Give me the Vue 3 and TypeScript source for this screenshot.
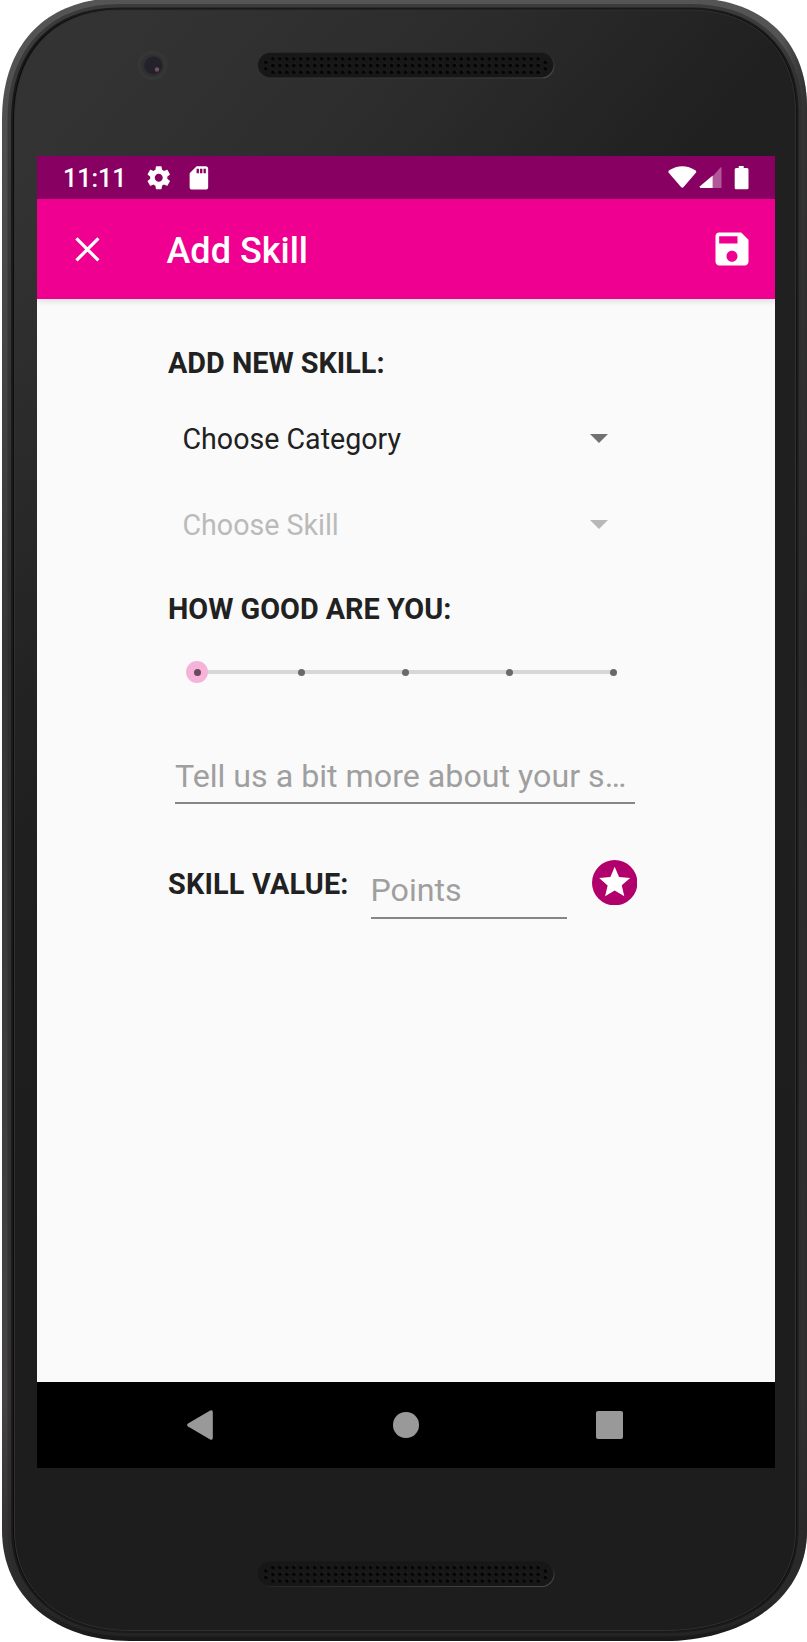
<script setup lang="ts">
import { ref } from 'vue'

interface Dot {
  x: number
  y: number
}

const speakerTops: number[] = [52.8, 1561.5]

const holes: Dot[] = []
for (let column = 0; column < 39; column++) {
  for (let row = 0; row < 3; row++) {
    holes.push({ x: 15 + column * 6.98, y: 6 + row * 6.75 })
  }
}
for (const x of [8, 287.5]) {
  holes.push({ x, y: 9.4 }, { x, y: 16 })
}

const steps: number[] = [0, 1, 2, 3, 4]
const level = ref<number>(0)
const details = ref<string>('')
const points = ref<string>('')
</script>

<template>
  <main class="device">
    <svg class="bezel" viewBox="0 0 807 1642" aria-hidden="true">
      <defs>
        <linearGradient id="rim" x1="0" y1="0" x2="0" y2="1">
          <stop offset="0" stop-color="#555" />
          <stop offset="0.12" stop-color="#4c4c4c" />
          <stop offset="0.4" stop-color="#353535" />
          <stop offset="0.85" stop-color="#454343" />
          <stop offset="0.97" stop-color="#2c2a2a" />
          <stop offset="1" stop-color="#181818" />
        </linearGradient>
        <linearGradient id="rimShade" x1="0" y1="0" x2="1" y2="0">
          <stop offset="0.97" stop-color="#262424" stop-opacity="0" />
          <stop offset="1" stop-color="#262424" stop-opacity="0.75" />
        </linearGradient>
        <linearGradient id="glass" gradientUnits="userSpaceOnUse" x1="150" y1="0" x2="540" y2="330">
          <stop offset="0" stop-color="#333334" />
          <stop offset="0.5" stop-color="#2c2c2c" />
          <stop offset="1" stop-color="#202020" />
        </linearGradient>
        <linearGradient id="glassLow" x1="0" y1="0" x2="0" y2="1">
          <stop offset="0.15" stop-color="#1d1d1d" stop-opacity="0" />
          <stop offset="0.75" stop-color="#1d1d1d" />
        </linearGradient>
        <linearGradient id="lip" x1="0" y1="0" x2="1" y2="1">
          <stop offset="0.35" stop-color="#484848" stop-opacity="0" />
          <stop offset="1" stop-color="#4c4c4c" />
        </linearGradient>
      </defs>
      <path fill="url(#rim)" d="M120-2H690C760-2 807 38 807 108V1530C807 1605 735 1641 665 1641H130C55 1641 2 1597 2 1530V120C2 40 50-2 120-2Z" />
      <path fill="url(#rimShade)" d="M120-2H690C760-2 807 38 807 108V1530C807 1605 735 1641 665 1641H130C55 1641 2 1597 2 1530V120C2 40 50-2 120-2Z" />
      <path class="rim-inner" d="M120 8.500H690C752 8.500 797.500 45 797.500 112V1530C797.500 1598 740 1632 665 1632H130C62 1632 12 1594 12 1530V120C12 47 55 8.500 120 8.500Z" />
      <path class="seam" d="M120 8.500H690C752 8.500 797.500 45 797.500 112V1530C797.500 1598 740 1632 665 1632H130C62 1632 12 1594 12 1530V120C12 47 55 8.500 120 8.500Z" />
      <path fill="url(#glass)" d="M120 10H690C750 10 795.500 46 795.500 112V1530C795.500 1596 739 1630.500 665 1630.500H130C63 1630.500 14.500 1593 14.500 1530V120C14.500 49 57 10 120 10Z" />
      <path class="glass-edge" fill="url(#glassLow)" d="M120 10H690C750 10 795.500 46 795.500 112V1530C795.500 1596 739 1630.500 665 1630.500H130C63 1630.500 14.500 1593 14.500 1530V120C14.500 49 57 10 120 10Z" />
      <circle cx="152.500" cy="65.500" r="15" fill="#363637" />
      <circle cx="152.500" cy="65.500" r="11.500" fill="#303033" />
      <circle cx="153.300" cy="65.500" r="9" fill="#232129" />
      <circle cx="157" cy="69.500" r="2.200" fill="#755061" />
      <g v-for="top in speakerTops" :key="top" :transform="`translate(258 ${top})`">
        <rect x="0.5" y="0.5" width="296" height="25" rx="12.500" fill="url(#lip)" />
        <rect width="295.500" height="24.600" rx="12.300" fill="#171717" />
        <circle v-for="(hole, index) in holes" :key="`s${index}`" :cx="hole.x + 0.8" :cy="hole.y - 0.9" r="1.500" fill="#242424" />
        <circle v-for="(hole, index) in holes" :key="index" :cx="hole.x" :cy="hole.y" r="1.800" fill="#050505" />
      </g>
    </svg>

    <section class="screen">
      <header class="status">
        <span class="clock">11:11</span>
        <svg class="gear" viewBox="0 0 24 24"><path d="M19.430 12.980c.04-.32.07-.64.07-.98s-.03-.66-.07-.98l2.110-1.650c.19-.15.24-.42.12-.64l-2-3.460c-.12-.22-.39-.3-.61-.22l-2.490 1c-.52-.4-1.080-.73-1.690-.98l-.38-2.650A.488.488 0 0 0 14 2h-4c-.25 0-.46.18-.49.42l-.38 2.650c-.61.25-1.170.59-1.690.98l-2.490-1c-.23-.09-.49 0-.61.22l-2 3.460c-.13.22-.07.49.12.64l2.110 1.650c-.04.32-.07.65-.07.98s.03.66.07.98l-2.110 1.650c-.19.15-.24.42-.12.64l2 3.460c.12.22.39.3.61.22l2.490-1c.52.4 1.080.73 1.690.98l.38 2.650c.03.24.24.42.49.42h4c.25 0 .46-.18.49-.42l.38-2.650c.61-.25 1.170-.59 1.690-.98l2.490 1c.23.09.49 0 .61-.22l2-3.460c.12-.22.07-.49-.12-.64l-2.110-1.650zM12 15.500c-1.930 0-3.500-1.570-3.500-3.500s1.570-3.500 3.500-3.500 3.500 1.570 3.500 3.500-1.570 3.500-3.500 3.500z" /></svg>
        <svg class="card" viewBox="0 0 24 24"><path d="M18 2h-8L4.020 8 4 20c0 1.100.9 2 2 2h12c1.100 0 2-.9 2-2V4c0-1.100-.9-2-2-2zm-6 6h-2V4h2v4zm3 0h-2V4h2v4zm3 0h-2V4h2v4z" /></svg>
        <svg class="signals" viewBox="0 0 82 24">
          <path d="M0.800 4.500Q14.300-4 27.800 4.500L28.300 6.200 15.600 21Q14.300 22.500 13 21L0.300 6.200Z" />
          <path opacity="0.350" d="M53.500 1.500V22H44.500V10.500L52.700 1.200Z" />
          <path d="M44.700 9.500V22H32.500Q31.200 21.300 32 20.300Z" />
          <path d="M70.700 0h5v2H79q1.500 0 1.500 1.500V22q0 1.300-1.300 1.300H68q-1.300 0-1.300-1.300V3.500Q66.700 2 68.200 2h2.500Z" />
        </svg>
      </header>

      <header class="toolbar">
        <button class="icon-button close" aria-label="Close">
          <svg viewBox="0 0 25 25"><path d="M1.400 1.400 23.400 23.400M23.400 1.400 1.400 23.400" /></svg>
        </button>
        <h1>Add Skill</h1>
        <button class="icon-button save" aria-label="Save">
          <svg viewBox="0 0 24 24"><path d="M17 3H5c-1.110 0-2 .9-2 2v14c0 1.100.89 2 2 2h14c1.100 0 2-.9 2-2V7l-4-4zm-5 16c-1.660 0-3-1.340-3-3s1.340-3 3-3 3 1.340 3 3-1.340 3-3 3zm3-10H5V5h10v4z" /></svg>
        </button>
      </header>

      <form class="content" @submit.prevent>
        <h2>ADD NEW SKILL:</h2>
        <div class="spinner">
          <span>Choose Category</span>
          <svg viewBox="0 0 18 9"><path d="M0 0H18L9 9Z" /></svg>
        </div>
        <div class="spinner disabled">
          <span>Choose Skill</span>
          <svg viewBox="0 0 18 9"><path d="M0 0H18L9 9Z" /></svg>
        </div>
        <h2 class="rating-title">HOW GOOD ARE YOU:</h2>
        <div class="slider">
          <span v-for="step in steps" :key="step" class="step" :class="{ active: step === level }" @click="level = step"></span>
        </div>
        <input v-model="details" class="details" type="text" placeholder="Tell us a bit more about your s…" />
        <div class="value-row">
          <h2>SKILL VALUE:</h2>
          <input v-model="points" class="points" type="text" placeholder="Points" />
          <svg class="star" viewBox="0 0 20 20">
            <circle cx="10" cy="10" r="10" fill="#b1006b" />
            <path fill="#fff" d="M14.230 16 10 13.450 5.770 16l1.120-4.810-3.730-3.230 4.920-.42L10 3l1.920 4.530 4.920.42-3.730 3.230L14.230 16z" />
          </svg>
        </div>
      </form>

      <nav class="navigation">
        <svg class="back" viewBox="0 0 26 30"><path d="M1 13.600 23.200.5Q25.800-.4 25.800 2V28Q25.800 30.400 23.200 29.500L1 16.400Q-.8 15 1 13.600Z" /></svg>
        <span class="home"></span>
        <span class="recent"></span>
      </nav>
    </section>
  </main>
</template>

<style>
body {
  margin: 0;
  background: #fff;
}
</style>

<style scoped>
.device {
  position: relative;
  box-sizing: border-box;
  width: 807px;
  height: 1642px;
  padding: 156px 32px 174px 37px;
  overflow: hidden;
  font-family: Roboto, "Liberation Sans", sans-serif;
}

.bezel {
  position: absolute;
  inset: 0;
  width: 807px;
  height: 1642px;
}

.rim-inner {
  fill: none;
  stroke: #2b2b2b;
  stroke-opacity: 0.6;
  stroke-width: 9;
}

.seam {
  fill: #0c0c0c;
  stroke: #1a1a1a;
  stroke-width: 2;
}

.glass-edge {
  stroke: #303030;
  stroke-width: 1;
}

.screen {
  position: relative;
  display: flex;
  flex-direction: column;
  width: 738px;
  height: 1312px;
  background: #fafafa;
}

.status {
  display: flex;
  align-items: center;
  box-sizing: border-box;
  height: 43px;
  flex: none;
  padding: 0 25px 0 26px;
  background: #880061;
  color: #fff;
}

.status svg {
  fill: #fff;
}

.clock {
  width: 82px;
  margin-top: 3px;
  font-size: 25px;
  font-weight: 500;
  line-height: 30px;
}

.gear {
  width: 27.5px;
  height: 27.5px;
}

.card {
  width: 27.8px;
  height: 27.8px;
  margin-left: 12px;
}

.signals {
  width: 82px;
  height: 24px;
  margin-left: auto;
}

.toolbar {
  display: flex;
  align-items: center;
  box-sizing: border-box;
  height: 100px;
  flex: none;
  padding: 0 21.5px 0 38px;
  background: #ef0090;
  color: #fff;
  box-shadow: 0 1px 7px rgba(0, 0, 0, 0.16);
  clip-path: inset(0 0 -12px 0);
}

.icon-button {
  display: flex;
  padding: 0;
  border: 0;
  background: none;
}

.close svg {
  width: 25px;
  height: 25px;
  fill: none;
  stroke: #fff;
  stroke-width: 3.2;
}

.save {
  margin-left: auto;
}

.save svg {
  width: 44px;
  height: 44px;
  fill: #fff;
}

h1 {
  margin: 3px 0 0 66.5px;
  font-size: 36px;
  font-weight: 500;
  line-height: 42px;
  white-space: nowrap;
}

.content {
  display: flex;
  flex: 1;
  flex-direction: column;
  padding: 44px 131px 0;
}

h2 {
  margin: 0;
  color: #212121;
  font-size: 28.8px;
  font-weight: 700;
  line-height: 40px;
  white-space: nowrap;
}

.spinner {
  display: flex;
  align-items: center;
  justify-content: space-between;
  height: 86px;
  padding: 0 36px 0 14.5px;
  color: #212121;
  font-size: 28.6px;
}

h2 + .spinner {
  margin-top: 13px;
}

.spinner svg {
  width: 18px;
  height: 9px;
  margin-bottom: 2px;
  fill: #717171;
}

.spinner.disabled {
  color: #bababa;
}

.spinner.disabled svg {
  fill: #b8b8b8;
}

.rating-title {
  margin-top: 21px;
}

.slider {
  display: flex;
  align-items: center;
  justify-content: space-between;
  height: 22px;
  width: 438px;
  margin: 32px 0 0 18px;
  background: linear-gradient(#d6d6d6, #d6d6d6) center / 416px 4px no-repeat;
}

.step {
  display: grid;
  place-items: center;
  width: 22px;
  height: 22px;
  border-radius: 50%;
}

.step::after {
  content: "";
  width: 7px;
  height: 7px;
  border-radius: 50%;
  background: #696969;
}

.step.active {
  background: #f5b3da;
}

.step.active::after {
  background: #6d4560;
}

input {
  box-sizing: border-box;
  padding: 0;
  border: 0;
  border-bottom: 2px solid #868686;
  border-radius: 0;
  outline: 0;
  background: none;
  color: #212121;
  font: 400 32.2px/40px Roboto, "Liberation Sans", sans-serif;
}

input::placeholder {
  color: #9f9f9f;
  opacity: 1;
}

.details {
  width: 460px;
  height: 52px;
  margin: 69px 0 0 7px;
  padding-bottom: 2px;
}

.value-row {
  display: flex;
  align-items: flex-start;
  margin-top: 56px;
}

.value-row h2 {
  width: 202.5px;
  margin-top: 4px;
  letter-spacing: 0.2px;
}

.points {
  width: 196px;
  height: 56px;
  margin-top: 3px;
  padding: 7px 0 7px;
}

.star {
  width: 45.4px;
  height: 45.4px;
  margin-left: 25.5px;
}

.navigation {
  display: flex;
  align-items: center;
  height: 86px;
  flex: none;
  background: #000;
}

.back {
  width: 26px;
  height: 30px;
  margin-left: 150px;
  fill: #999;
}

.home {
  width: 25.5px;
  height: 25.5px;
  margin-left: 180px;
  border-radius: 50%;
  background: #999;
}

.recent {
  width: 27px;
  height: 28px;
  margin-left: 177.5px;
  border-radius: 2px;
  background: #999;
}
</style>
